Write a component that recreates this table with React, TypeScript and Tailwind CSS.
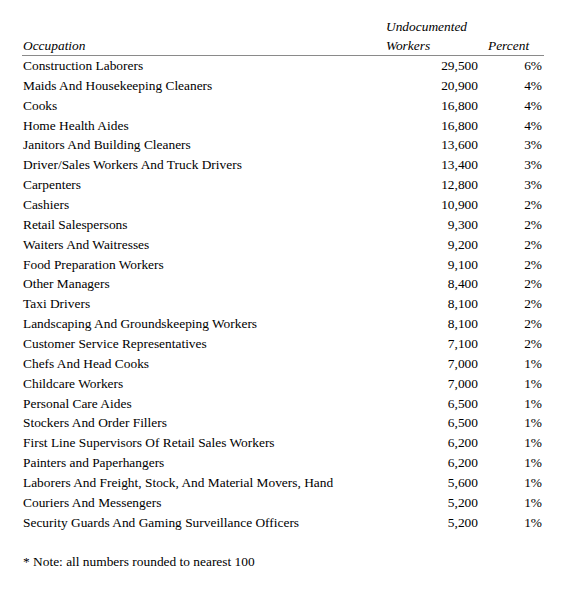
import React from "react";

const rows: [string, string, string][] = [
  ["Construction Laborers", "29,500", "6%"],
  ["Maids And Housekeeping Cleaners", "20,900", "4%"],
  ["Cooks", "16,800", "4%"],
  ["Home Health Aides", "16,800", "4%"],
  ["Janitors And Building Cleaners", "13,600", "3%"],
  ["Driver/Sales Workers And Truck Drivers", "13,400", "3%"],
  ["Carpenters", "12,800", "3%"],
  ["Cashiers", "10,900", "2%"],
  ["Retail Salespersons", "9,300", "2%"],
  ["Waiters And Waitresses", "9,200", "2%"],
  ["Food Preparation Workers", "9,100", "2%"],
  ["Other Managers", "8,400", "2%"],
  ["Taxi Drivers", "8,100", "2%"],
  ["Landscaping And Groundskeeping Workers", "8,100", "2%"],
  ["Customer Service Representatives", "7,100", "2%"],
  ["Chefs And Head Cooks", "7,000", "1%"],
  ["Childcare Workers", "7,000", "1%"],
  ["Personal Care Aides", "6,500", "1%"],
  ["Stockers And Order Fillers", "6,500", "1%"],
  ["First Line Supervisors Of Retail Sales Workers", "6,200", "1%"],
  ["Painters and Paperhangers", "6,200", "1%"],
  ["Laborers And Freight, Stock, And Material Movers, Hand", "5,600", "1%"],
  ["Couriers And Messengers", "5,200", "1%"],
  ["Security Guards And Gaming Surveillance Officers", "5,200", "1%"],
];

export default function App() {
  return (
    <div className="w-[569px] h-[600px] bg-white text-black text-[13.4px] pl-[22px] pt-[17px] font-[family-name:'Liberation_Serif']">
      <div className="w-[522px]">
        <div className="grid grid-cols-[364px_102px_56px] italic border-b-[1.5px] border-[#8a8a8a]">
          <div className="pl-[1px] self-end leading-[18px]">Occupation</div>
          <div>
            <div className="leading-[20px]">Undocumented</div>
            <div className="leading-[18px]">Workers</div>
          </div>
          <div className="self-end leading-[18px]">Percent</div>
        </div>
        <div className="flex flex-col">
          {rows.map(([occ, n, p]) => (
            <div key={occ} className="grid grid-cols-[364px_92px_64px] h-[19.87px] leading-[19.87px]">
              <div className="pl-[1px] whitespace-nowrap">{occ}</div>
              <div className="text-right">{n}</div>
              <div className="text-right">{p}</div>
            </div>
          ))}
        </div>
        <div className="mt-[19.6px] pl-[1px] leading-[20px]">* Note: all numbers rounded to nearest 100</div>
      </div>
    </div>
  );
}
